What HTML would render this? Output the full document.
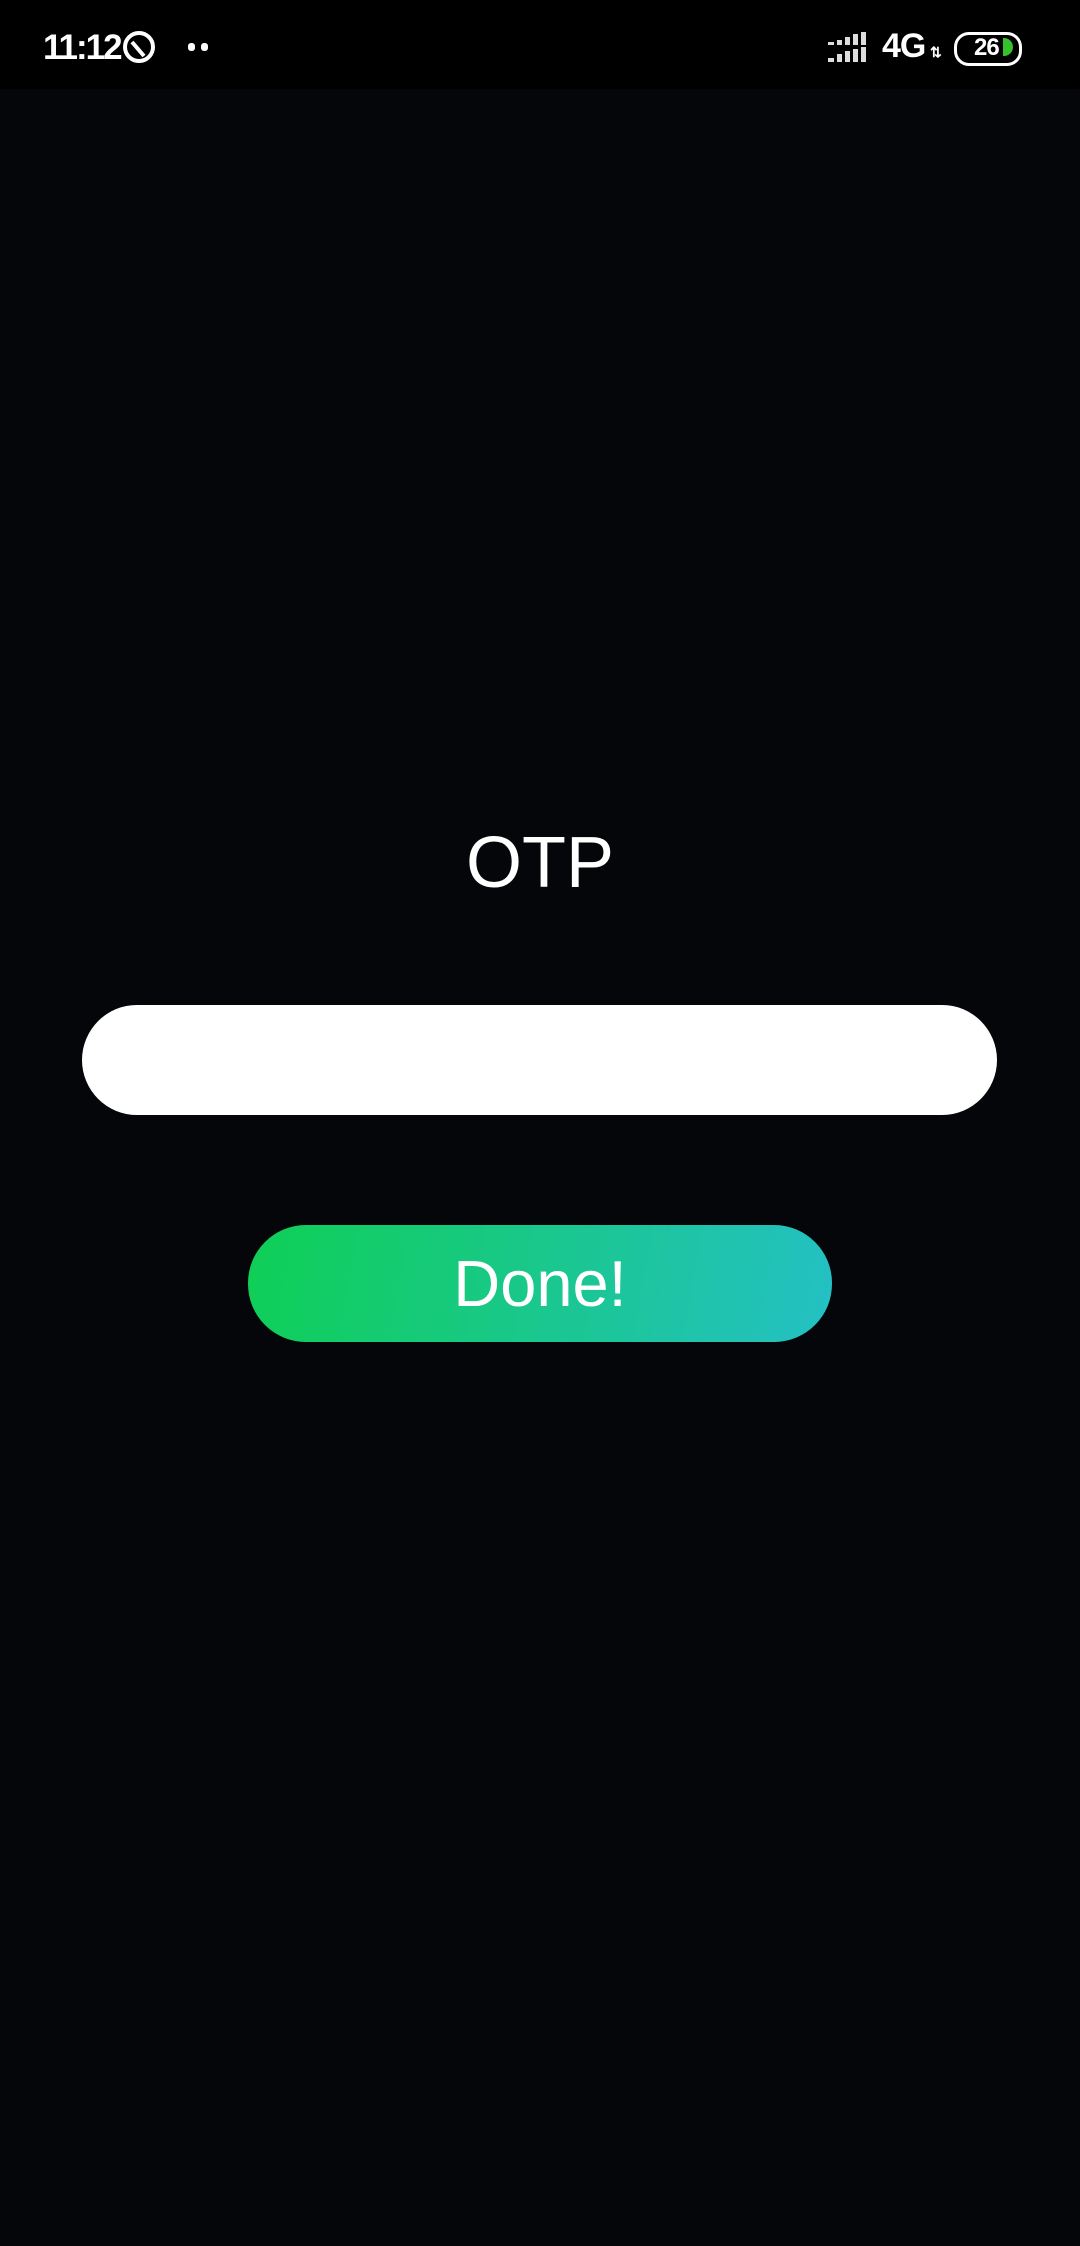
<!DOCTYPE html>
<html><head><meta charset="utf-8"><style>
html,body{margin:0;padding:0}
body{width:1080px;height:2246px;background:#04060a;position:relative;overflow:hidden;font-family:"Liberation Sans",sans-serif;color:#fff}
.sb{position:absolute;left:0;top:0;width:1080px;height:89px;background:#000}
.t{position:absolute;left:43px;top:28px;font-size:35px;font-weight:bold;letter-spacing:-2px}
.otp{position:absolute;left:0;width:1080px;top:822px;text-align:center;font-size:72px}
.in{position:absolute;left:82px;top:1005px;width:915px;height:110px;border-radius:55px;background:#fff}
.btn{position:absolute;left:248px;top:1225px;width:584px;height:117px;border-radius:58px;background:linear-gradient(100deg,#0fcf55,#24c0c4);text-align:center;line-height:117px;font-size:65px}
</style></head><body>
<div class="sb">
<div class="t">11:12</div>
<svg style="position:absolute;left:122px;top:30px" width="34" height="34" viewBox="0 0 34 34"><circle cx="17" cy="17" r="14" fill="none" stroke="#fff" stroke-width="4"/><path d="M10 12 L22 26" stroke="#fff" stroke-width="4"/></svg>
<div style="position:absolute;left:188px;top:43px;width:7px;height:8px;background:#fff;border-radius:3px"></div>
<div style="position:absolute;left:201px;top:43px;width:7px;height:8px;background:#fff;border-radius:3px"></div>
<svg style="position:absolute;left:828px;top:32px" width="44" height="32" viewBox="0 0 44 32"><g fill="#ddd"><rect x="0" y="10" width="6" height="3"/><rect x="9" y="8" width="5" height="5"/><rect x="17" y="5" width="5" height="8"/><rect x="25" y="2" width="5" height="11"/><rect x="33" y="0" width="5" height="13"/><rect x="0" y="26" width="6" height="4"/><rect x="9" y="22" width="5" height="8"/><rect x="17" y="19" width="5" height="11"/><rect x="25" y="17" width="5" height="13"/><rect x="33" y="15" width="5" height="15"/></g></svg>
<div style="position:absolute;left:882px;top:27px;font-size:34px;font-weight:bold;letter-spacing:-1px">4G</div>
<div style="position:absolute;left:930px;top:44px;font-size:14px;font-weight:bold">⇅</div>
<div style="position:absolute;left:954px;top:32px;width:62px;height:28px;border:3px solid #fff;border-radius:15px"></div>
<div style="position:absolute;left:974px;top:34px;font-size:24px;font-weight:bold;letter-spacing:-1px">26</div>
<div style="position:absolute;left:1003px;top:38px;width:10px;height:18px;background:#36c22a;border-radius:0 9px 9px 0"></div>
</div>
<div class="otp">OTP</div>
<div class="in"></div>
<div class="btn">Done!</div>
</body></html>
